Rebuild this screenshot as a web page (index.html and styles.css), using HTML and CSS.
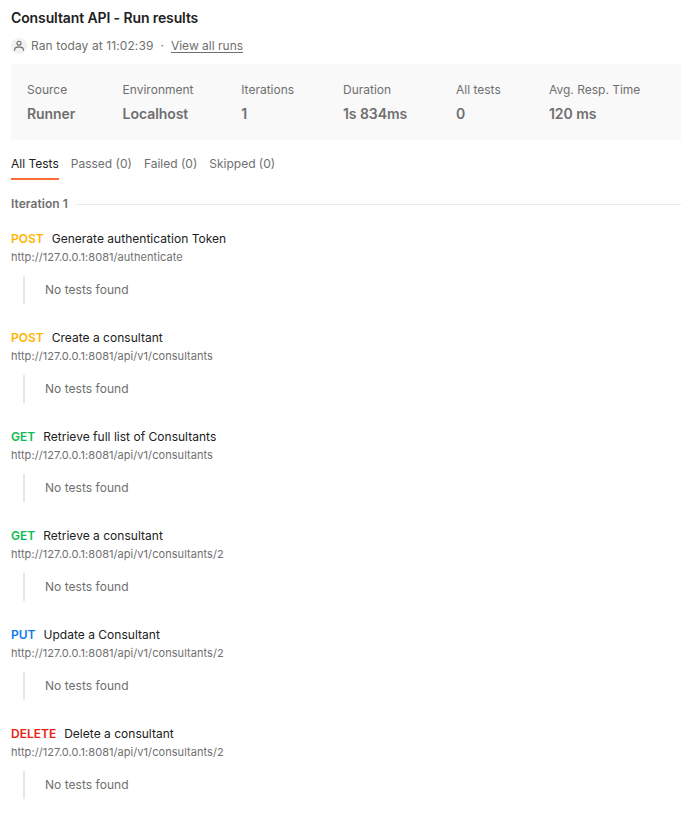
FILE: index.html
```html
<!DOCTYPE html>
<html lang="en">
<head>
<meta charset="utf-8">
<title>Consultant API - Run results</title>
<link rel="stylesheet" href="styles.css">
</head>
<body>
<main class="page">
<h1 class="title">Consultant API - Run results</h1>
<div class="meta">
<svg class="avatar" viewBox="0 0 16 16" width="16" height="16"><circle cx="8" cy="8" r="8" fill="#f2f2f2"/><circle cx="8" cy="5.2" r="2" fill="none" stroke="#6b6b6b" stroke-width="1.1"/><path d="M3.5 12.8c0-2.4 1.2-3.7 3.1-3.7h2.8c1.9 0 3.1 1.3 3.1 3.7" fill="none" stroke="#6b6b6b" stroke-width="1.1"/></svg>
<span class="ran">Ran today at 11:02:39</span><span class="dot">·</span><a class="link">View all runs</a>
</div>
<dl class="summary">
<div><dt>Source</dt><dd>Runner</dd></div>
<div><dt>Environment</dt><dd>Localhost</dd></div>
<div><dt>Iterations</dt><dd>1</dd></div>
<div><dt>Duration</dt><dd>1s 834ms</dd></div>
<div><dt>All tests</dt><dd>0</dd></div>
<div><dt>Avg. Resp. Time</dt><dd>120 ms</dd></div>
</dl>
<nav class="tabs"><span class="tab active">All Tests</span><span class="tab">Passed (0)</span><span class="tab">Failed (0)</span><span class="tab">Skipped (0)</span></nav>
<h2 class="iteration">Iteration 1</h2>
<section class="request"><div class="head"><b class="post">POST</b><span>Generate authentication Token</span></div><div class="url">http://127.0.0.1:8081/authenticate</div><div class="empty">No tests found</div></section>
<section class="request"><div class="head"><b class="post">POST</b><span>Create a consultant</span></div><div class="url">http://127.0.0.1:8081/api/v1/consultants</div><div class="empty">No tests found</div></section>
<section class="request"><div class="head"><b class="get">GET</b><span>Retrieve full list of Consultants</span></div><div class="url">http://127.0.0.1:8081/api/v1/consultants</div><div class="empty">No tests found</div></section>
<section class="request"><div class="head"><b class="get">GET</b><span>Retrieve a consultant</span></div><div class="url">http://127.0.0.1:8081/api/v1/consultants/2</div><div class="empty">No tests found</div></section>
<section class="request"><div class="head"><b class="put">PUT</b><span>Update a Consultant</span></div><div class="url">http://127.0.0.1:8081/api/v1/consultants/2</div><div class="empty">No tests found</div></section>
<section class="request"><div class="head"><b class="delete">DELETE</b><span>Delete a consultant</span></div><div class="url">http://127.0.0.1:8081/api/v1/consultants/2</div><div class="empty">No tests found</div></section>
</main>
</body>
</html>
```
FILE: styles.css
```css
* { box-sizing: border-box; }
body { margin: 0; background: #fff; color: #6f6f6f; font: 12px/16px Inter, sans-serif; }
.page { padding: 8px 0 0 11px; }
.title { margin: 0; color: #212121; font-size: 14px; font-weight: 600; line-height: 20px; letter-spacing: -0.11px; }
.meta { display: flex; align-items: center; height: 16px; margin-top: 10px; }
.ran { margin-left: 4px; letter-spacing: 0.1px; font-feature-settings: "calt" 0; }
.dot { margin: 0 7px; }
.link { text-decoration: underline; text-underline-offset: 2px; }
.summary { display: grid; grid-template-columns: 95.6px 118.6px 101.8px 113px 93px auto; height: 76px; margin: 10px 0 0; padding: 16px; background: #f9f9f9; white-space: nowrap; }
.summary dt { line-height: 20px; }
.summary dd { margin: 4px 0 0; font-size: 14px; font-weight: 600; line-height: 20px; letter-spacing: -0.06px; }
.tabs { display: flex; gap: 12px; height: 40px; }
.tab { padding-top: 16px; }
.active { color: #212121; border-bottom: 2px solid #ff6c37; }
.iteration { display: flex; align-items: center; gap: 8px; height: 16px; margin: 16px 0 19px; font-size: 12px; font-weight: 600; letter-spacing: 0.05px; }
.iteration::after { content: ""; flex: 1; height: 1px; background: #ebebeb; }
.request { height: 99px; }
.head { display: flex; gap: 8px; height: 16px; color: #212121; }
.head span { letter-spacing: 0.02px; }
.head b { font-weight: 600; }
.head .post { color: #ffb400; }
.head .get { color: #0cbb52; }
.head .put { color: #097bed; }
.head .delete { color: #eb2013; }
.url { margin-top: 2px; font-size: 11px; letter-spacing: 0.06px; }
.empty { height: 28px; margin: 11px 0 0 12px; padding: 6px 0 0 20px; border-left: 2px solid #e6e6e6; letter-spacing: 0.03px; }
```
